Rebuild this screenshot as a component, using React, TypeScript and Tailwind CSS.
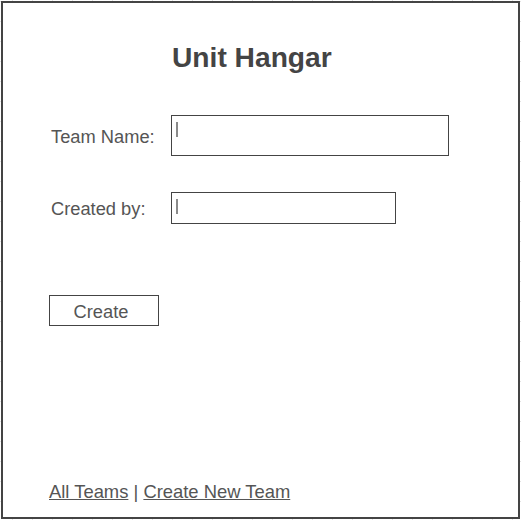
const Field = ({ label, width, height }: { label: string; width: string; height: string }) => (
  <div className="flex items-center">
    <div className="w-[122px] pl-[2px] pt-px text-[18.3px] leading-[21px] text-[#555]">{label}</div>
    <div className={`${width} ${height} border border-[#444] bg-white pl-[4px] pt-[6px]`}>
      <div className="w-[2px] h-[15px] bg-[#8a8a8a]" />
    </div>
  </div>
);

const App = () => {
  return (
    <div className="w-[521px] h-[520px] pl-px pt-px bg-white bg-[linear-gradient(to_right,#e4e4e4_1px,transparent_1px),linear-gradient(to_bottom,#e4e4e4_1px,transparent_1px)] bg-[size:20px_20px] bg-[position:12px_1px] font-['Liberation_Sans',Arial,sans-serif]">
      <div className="w-[519px] h-[518px] bg-white border-2 border-[#444] flex flex-col pl-[46px] pb-[15px]">
        <h1 className="mt-[38px] pl-[123px] text-[28.2px] leading-[32px] font-bold text-[#444]">Unit Hangar</h1>

        <div className="mt-[42px]">
          <Field label="Team Name:" width="w-[278px]" height="h-[41px]" />
        </div>
        <div className="mt-[36px]">
          <Field label="Created by:" width="w-[225px]" height="h-[32px]" />
        </div>

        <button className="mt-[71px] w-[110px] h-[31px] pt-px pr-[6px] border border-[#444] bg-white text-[18.3px] leading-[21px] text-[#555]">
          Create
        </button>

        <div className="mt-auto text-[18.4px] leading-[21px] text-[#555]">
          <a href="#" className="underline">All Teams</a>
          {" | "}
          <a href="#" className="underline">Create New Team</a>
        </div>
      </div>
    </div>
  );
};

export default App;
